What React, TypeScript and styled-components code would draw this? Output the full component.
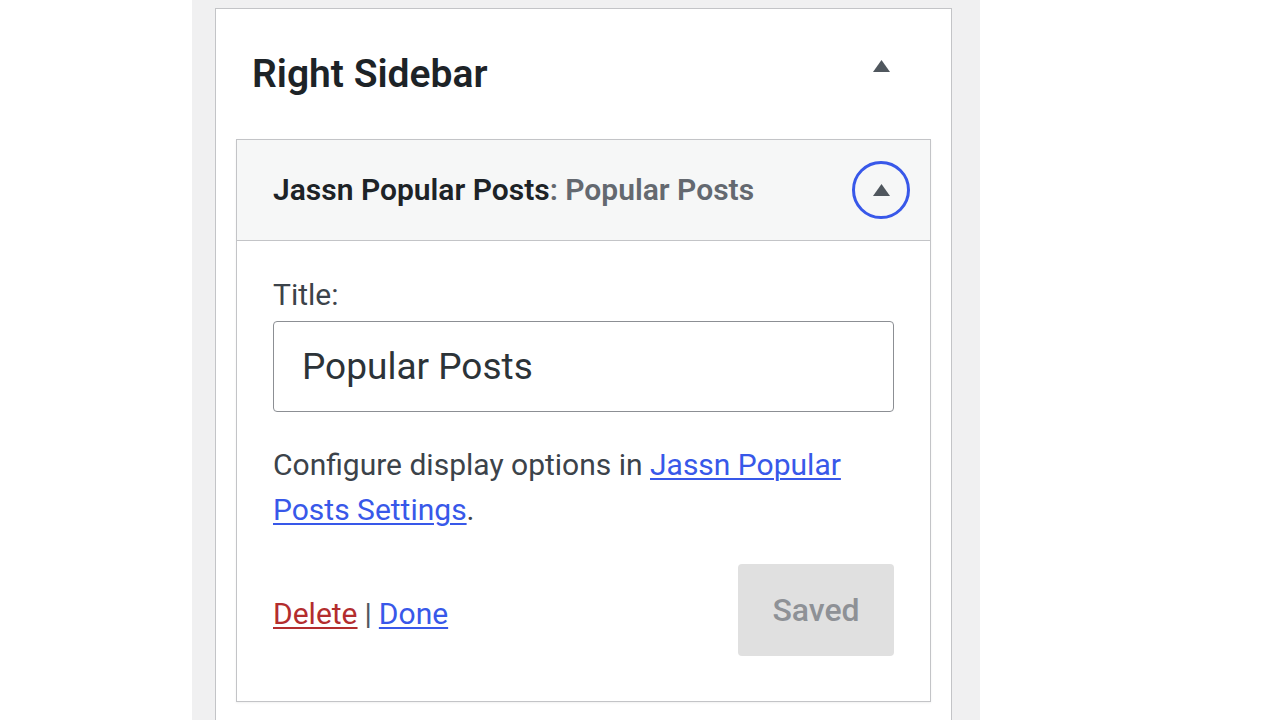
import styled, { createGlobalStyle } from "styled-components";

const GlobalStyle = createGlobalStyle`
  html, body {
    margin: 0;
    padding: 0;
    background: #ffffff;
  }
  body {
    font-family: Roboto, "Noto Sans", "Liberation Sans", sans-serif;
    color: #1d2327;
  }
`;

const Page = styled.div`
  display: flex;
  height: 720px;
  overflow: hidden;
  padding-left: 192px;
`;

const Column = styled.div`
  width: 788px;
  box-sizing: border-box;
  background: #f0f0f1;
  padding: 8px 28px 0 23px;
  display: flex;
  flex-direction: column;
`;

const SidebarPanel = styled.div`
  flex: 1;
  background: #ffffff;
  border: 1px solid #c3c4c7;
  border-bottom: none;
  padding: 0 20px;
  display: flex;
  flex-direction: column;
`;

const PanelHeader = styled.div`
  height: 130px;
  display: flex;
  align-items: center;
  justify-content: space-between;
  padding: 0 21px 0 16px;
`;

const PanelTitle = styled.h2`
  margin: 0 0 1px 0;
  font-size: 39px;
  font-weight: 600;
  color: #1d2327;
`;

const ToggleButton = styled.button<{ $focused?: boolean; $lift?: number }>`
  width: 58px;
  height: 58px;
  box-sizing: border-box;
  padding: 0;
  margin-bottom: ${(p) => (p.$lift ? `${p.$lift}px` : "0")};
  border-radius: 50%;
  background: transparent;
  border: 3px solid ${(p) => (p.$focused ? "#3858e9" : "transparent")};
  display: flex;
  align-items: center;
  justify-content: center;
  color: #50575e;
`;

const WidgetBox = styled.div`
  border: 1px solid #c3c4c7;
  box-shadow: 0 1px 2px rgba(0, 0, 0, 0.06);
  background: #ffffff;
`;

const WidgetHeader = styled.div`
  height: 101px;
  box-sizing: border-box;
  background: #f6f7f7;
  border-bottom: 1px solid #c3c4c7;
  display: flex;
  align-items: center;
  justify-content: space-between;
  padding: 0 20px 0 36px;
`;

const WidgetTitle = styled.h3`
  margin: 0 0 2px 0;
  font-size: 30px;
  font-weight: 600;
  color: #1d2327;
`;

const WidgetSubtitle = styled.span`
  color: #646970;
`;

const WidgetBody = styled.div`
  padding: 33px 36px 45px 36px;
  display: flex;
  flex-direction: column;
`;

const FieldLabel = styled.label`
  font-size: 30px;
  line-height: 42px;
  color: #3c434a;
`;

const TextInput = styled.input`
  margin-top: 5px;
  height: 91px;
  box-sizing: border-box;
  border: 1px solid #8c8f94;
  border-radius: 4px;
  padding: 0 28px;
  font-family: inherit;
  font-size: 37px;
  color: #2c3338;
  background: #ffffff;
  outline: none;
`;

const Description = styled.p`
  margin: 30px 0 0 0;
  font-size: 30px;
  line-height: 45px;
  color: #3c434a;
`;

const TextLink = styled.a<{ $danger?: boolean }>`
  color: ${(p) => (p.$danger ? "#b32d2e" : "#3858e9")};
  text-decoration: underline;
  text-underline-offset: 3px;
  text-decoration-thickness: 2px;
  cursor: pointer;
`;

const ActionsRow = styled.div`
  margin-top: 32px;
  display: flex;
  align-items: center;
  justify-content: space-between;
`;

const LinkGroup = styled.div`
  font-size: 30px;
  color: #50575e;
  padding-top: 6px;
`;

const Separator = styled.span`
  margin: 0 7px;
`;

const SaveButton = styled.button`
  width: 156px;
  height: 92px;
  border: none;
  border-radius: 4px;
  background: #e0e0e0;
  color: #8e9196;
  font-family: inherit;
  font-size: 32px;
  font-weight: 500;
`;

const ArrowUp = () => (
  <svg width="17" height="12" viewBox="0 0 17 12" aria-hidden="true">
    <polygon points="8.5,0 17,12 0,12" fill="currentColor" />
  </svg>
);

export default function App() {
  return (
    <>
      <GlobalStyle />
      <Page>
        <Column>
          <SidebarPanel>
            <PanelHeader>
              <PanelTitle>Right Sidebar</PanelTitle>
              <ToggleButton $lift={16} aria-label="Collapse Right Sidebar">
                <ArrowUp />
              </ToggleButton>
            </PanelHeader>
            <WidgetBox>
              <WidgetHeader>
                <WidgetTitle>
                  Jassn Popular Posts<WidgetSubtitle>: Popular Posts</WidgetSubtitle>
                </WidgetTitle>
                <ToggleButton $focused aria-label="Collapse widget">
                  <ArrowUp />
                </ToggleButton>
              </WidgetHeader>
              <WidgetBody>
                <FieldLabel htmlFor="widget-title">Title:</FieldLabel>
                <TextInput id="widget-title" defaultValue="Popular Posts" />
                <Description>
                  Configure display options in{" "}
                  <TextLink>Jassn Popular Posts Settings</TextLink>.
                </Description>
                <ActionsRow>
                  <LinkGroup>
                    <TextLink $danger>Delete</TextLink>
                    <Separator>|</Separator>
                    <TextLink>Done</TextLink>
                  </LinkGroup>
                  <SaveButton disabled>Saved</SaveButton>
                </ActionsRow>
              </WidgetBody>
            </WidgetBox>
          </SidebarPanel>
        </Column>
      </Page>
    </>
  );
}
